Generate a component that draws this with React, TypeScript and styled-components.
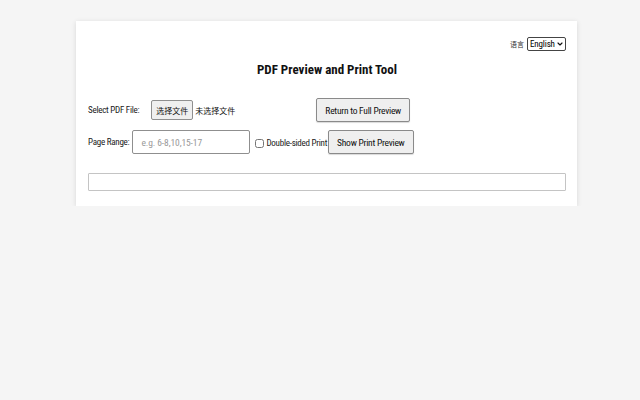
import React from 'react';
import styled, { createGlobalStyle } from 'styled-components';
import { ChevronDown } from 'lucide-react';

const GlobalStyle = createGlobalStyle`
  html, body {
    margin: 0;
    padding: 0;
    background: #f5f5f5;
    font-family: Roboto, "Liberation Sans", "Noto Sans CJK SC", sans-serif;
    font-stretch: 75%;
    color: #222;
  }

  button, input, select {
    font-stretch: 75%;
  }
`;

const cjk = '"Noto Sans CJK SC", sans-serif';

const App = () => {
  return (
    <>
      <GlobalStyle />
      <Page>
        <Card>
          <LangBar>
            <LangLabel>语言</LangLabel>
            <SelectWrap>
              <LangSelect defaultValue="en">
                <option value="en">English</option>
                <option value="zh">中文</option>
              </LangSelect>
              <SelectArrow size={8} strokeWidth={3.5} />
            </SelectWrap>
          </LangBar>

          <Title>PDF Preview and Print Tool</Title>

          <Row>
            <FieldLabel $gap={12}>Select PDF File:</FieldLabel>
            <FilePicker>
              <SmallButton type="button">选择文件</SmallButton>
              <FileName>未选择文件</FileName>
            </FilePicker>
            <ActionButton type="button">Return to Full Preview</ActionButton>
          </Row>

          <Row>
            <FieldLabel $gap={3}>Page Range:</FieldLabel>
            <RangeInput placeholder="e.g. 6-8,10,15-17" />
            <CheckLabel>
              <Check type="checkbox" />
              Double-sided Print
            </CheckLabel>
            <ActionButton type="button">Show Print Preview</ActionButton>
          </Row>

          <PreviewBox />
        </Card>
      </Page>
    </>
  );
};

const Page = styled.div`
  padding: 21px 0 0 76px;
`;

const Card = styled.div`
  width: 501px;
  box-sizing: border-box;
  background: #fff;
  padding: 16px 11px 15px 12px;
  box-shadow: 0 1px 5px rgba(0, 0, 0, 0.12);
  display: flex;
  flex-direction: column;
`;

const LangBar = styled.div`
  display: flex;
  justify-content: flex-end;
  align-items: center;
  gap: 3px;
  height: 14px;
`;

const LangLabel = styled.span`
  font-size: 7px;
  color: #333;
  font-family: ${cjk};
`;

const SelectWrap = styled.div`
  position: relative;
  display: flex;
`;

const LangSelect = styled.select`
  appearance: none;
  width: 39px;
  height: 14px;
  box-sizing: border-box;
  padding: 0 9px 0 2px;
  font-size: 9px;
  letter-spacing: -0.15px;
  font-family: Roboto, sans-serif;
  border: 1px solid #444;
  border-radius: 2px;
  background: #fff;
  color: #000;
`;

const SelectArrow = styled(ChevronDown)`
  position: absolute;
  right: 2px;
  top: 3px;
  color: #111;
  pointer-events: none;
`;

const Title = styled.h1`
  margin: 11px 0 20px;
  text-align: center;
  font-size: 13px;
  font-weight: bold;
  line-height: 16px;
  color: #111;
`;

const Row = styled.div`
  display: flex;
  align-items: center;
  height: 24px;
  margin-bottom: 8px;

  & + & {
    margin-bottom: 19px;
  }
`;

const FieldLabel = styled.label<{ $gap: number }>`
  font-size: 9px;
  letter-spacing: -0.25px;
  color: #1a1a1a;
  margin-right: ${({ $gap }) => $gap}px;
`;

const FilePicker = styled.div`
  display: flex;
  align-items: center;
  gap: 2px;
  width: 165px;
`;

const SmallButton = styled.button`
  height: 20px;
  padding: 0 4px;
  font-size: 8px;
  font-family: ${cjk};
  background: #efefef;
  border: 1px solid #8f8f8f;
  border-radius: 2px;
  color: #111;
`;

const FileName = styled.span`
  font-size: 8px;
  font-family: ${cjk};
  color: #111;
`;

const ActionButton = styled.button`
  height: 24px;
  padding: 0 8px;
  font-size: 9.5px;
  letter-spacing: -0.25px;
  font-family: Roboto, sans-serif;
  background: #efefef;
  border: 1px solid #8a8a8a;
  border-radius: 2px;
  color: #111;
  box-shadow: 0 1px 1px rgba(0, 0, 0, 0.15);
`;

const RangeInput = styled.input`
  width: 118px;
  height: 24px;
  box-sizing: border-box;
  padding: 0 8px;
  font-size: 9.5px;
  letter-spacing: -0.1px;
  font-family: Roboto, sans-serif;
  border: 1px solid #8f8f8f;
  border-radius: 2px;
  margin-right: 5px;

  &::placeholder {
    color: #999;
  }
`;

const CheckLabel = styled.label`
  display: flex;
  align-items: center;
  gap: 2px;
  font-size: 9px;
  letter-spacing: -0.25px;
  color: #1a1a1a;
  margin-right: 1px;
  padding-top: 2px;
`;

const Check = styled.input`
  width: 9px;
  height: 9px;
  margin: 0;
`;

const PreviewBox = styled.div`
  height: 18px;
  box-sizing: border-box;
  border: 1px solid #c4c4c4;
  border-radius: 1px;
`;

export default App;
